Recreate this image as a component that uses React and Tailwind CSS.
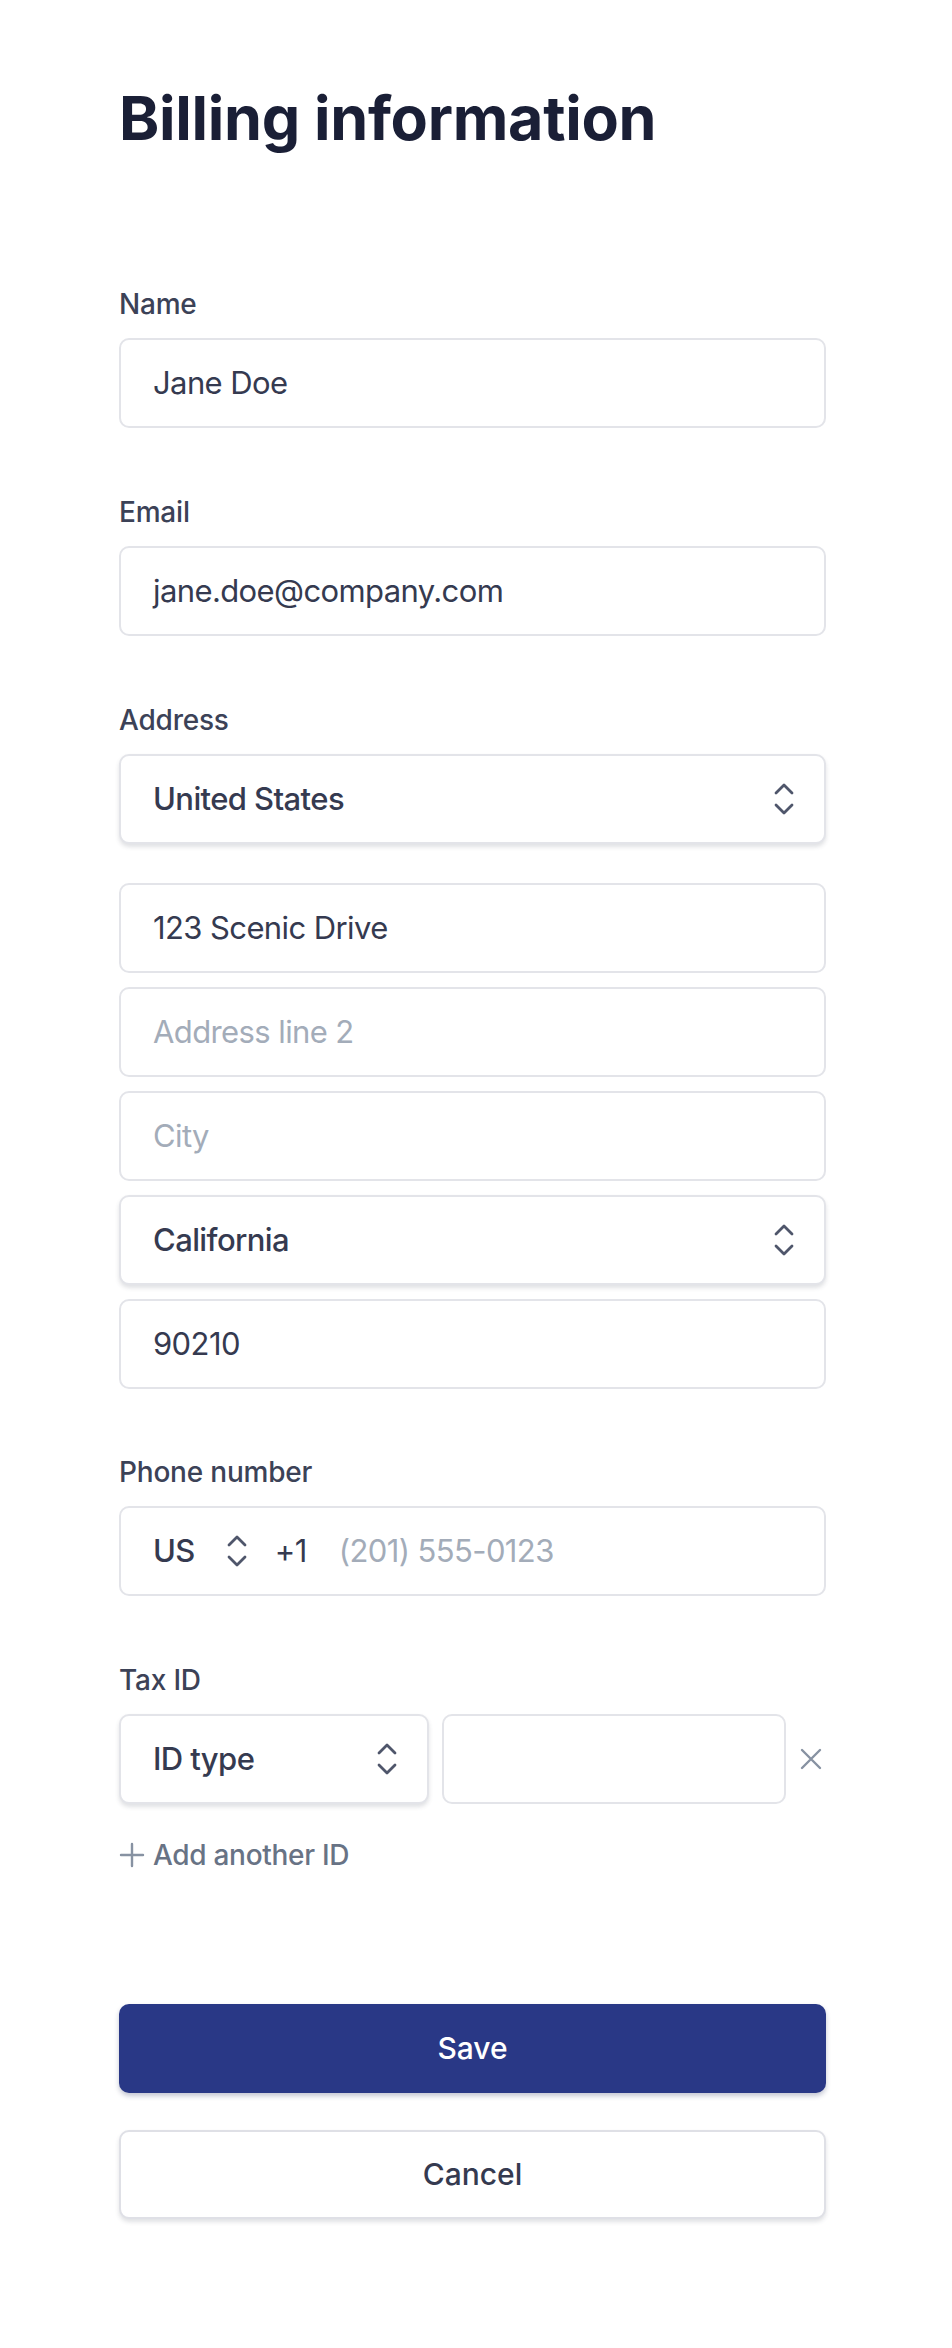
import React from 'react';

const font = { fontFamily: 'Inter, "Noto Sans", sans-serif' };

function Chevrons({ className = '' }) {
    return (
        <svg width="24" height="36" viewBox="0 0 24 36" fill="none" className={className}>
            <path d="M4 12 L12 4 L20 12" stroke="#4f566b" strokeWidth="2.8" strokeLinecap="round" strokeLinejoin="round" />
            <path d="M4 24 L12 32 L20 24" stroke="#4f566b" strokeWidth="2.8" strokeLinecap="round" strokeLinejoin="round" />
        </svg>
    );
}

function Label({ children }) {
    return (
        <div className="text-[28px] leading-[40px] font-medium text-[#3c4257] mb-[14px] tracking-[-0.2px]">
            {children}
        </div>
    );
}

function TextInput({ value, placeholder, className = '' }) {
    return (
        <div className={`h-[90px] border-2 border-[#e3e4e9] rounded-[10px] bg-white flex items-center px-[32px] text-[31px] tracking-[-0.6px] ${className}`}>
            {value ? (
                <span className="text-[#353a50]">{value}</span>
            ) : (
                <span className="text-[#a3acb9]">{placeholder}</span>
            )}
        </div>
    );
}

function Select({ value, className = '' }) {
    return (
        <div className={`h-[90px] border-2 border-[#e3e4e9] rounded-[10px] bg-white flex items-center justify-between pl-[32px] pr-[28px] text-[31px] tracking-[-0.6px] font-medium text-[#353a50] shadow-[0_3px_4px_rgba(60,66,87,0.16)] ${className}`}>
            <span>{value}</span>
            <Chevrons />
        </div>
    );
}

export default function App() {
    return (
        <div className="min-h-[2348px] bg-white" style={font}>
            <div className="ml-[119px] w-[707px] pt-[80px] pb-[130px]">
                <h1 className="text-[61px] leading-[76px] font-bold text-[#1a1f36] tracking-[-0.3px]">
                    Billing information
                </h1>

                <div className="mt-[128px]">
                    <Label>Name</Label>
                    <TextInput value="Jane Doe" />
                </div>

                <div className="mt-[64px]">
                    <Label>Email</Label>
                    <TextInput value="jane.doe@company.com" />
                </div>

                <div className="mt-[64px]">
                    <Label>Address</Label>
                    <Select value="United States" />
                    <div className="mt-[39px] flex flex-col gap-[14px]">
                        <TextInput value="123 Scenic Drive" />
                        <TextInput placeholder="Address line 2" />
                        <TextInput placeholder="City" />
                        <Select value="California" />
                        <TextInput value="90210" />
                    </div>
                </div>

                <div className="mt-[63px]">
                    <Label>Phone number</Label>
                    <div className="h-[90px] border-2 border-[#e3e4e9] rounded-[10px] bg-white flex items-center pl-[32px] text-[31px] tracking-[-0.6px]">
                        <span className="font-medium text-[#353a50]">US</span>
                        <Chevrons className="ml-[30px]" />
                        <span className="ml-[26px] text-[#353a50]">+1</span>
                        <span className="ml-[32px] text-[#a3acb9]">(201) 555-0123</span>
                    </div>
                </div>

                <div className="mt-[64px]">
                    <Label>Tax ID</Label>
                    <div className="flex items-center">
                        <Select value="ID type" className="w-[310px]" />
                        <TextInput className="ml-[13px] w-[344px]" />
                        <svg width="24" height="24" viewBox="0 0 24 24" className="ml-[13px]">
                            <path d="M3 3 L21 21 M21 3 L3 21" stroke="#8792a2" strokeWidth="2.4" strokeLinecap="round" />
                        </svg>
                    </div>
                    <div className="mt-[31px] flex items-center text-[28px] leading-[40px] font-medium text-[#687385] tracking-[-0.3px]">
                        <svg width="26" height="26" viewBox="0 0 26 26">
                            <path d="M13 2 V24 M2 13 H24" stroke="#8792a2" strokeWidth="2.4" strokeLinecap="round" />
                        </svg>
                        <span className="ml-[8px]">Add another ID</span>
                    </div>
                </div>

                <button className="mt-[129px] w-full h-[89px] rounded-[10px] bg-[#293886] text-white text-[30px] font-medium shadow-[0_3px_5px_rgba(20,30,80,0.25)]">
                    Save
                </button>
                <button className="mt-[37px] w-full h-[89px] rounded-[10px] bg-white border-2 border-[#dfe0e6] text-[#353a50] text-[30px] font-medium shadow-[0_3px_4px_rgba(60,66,87,0.16)]">
                    Cancel
                </button>
            </div>
        </div>
    );
}
